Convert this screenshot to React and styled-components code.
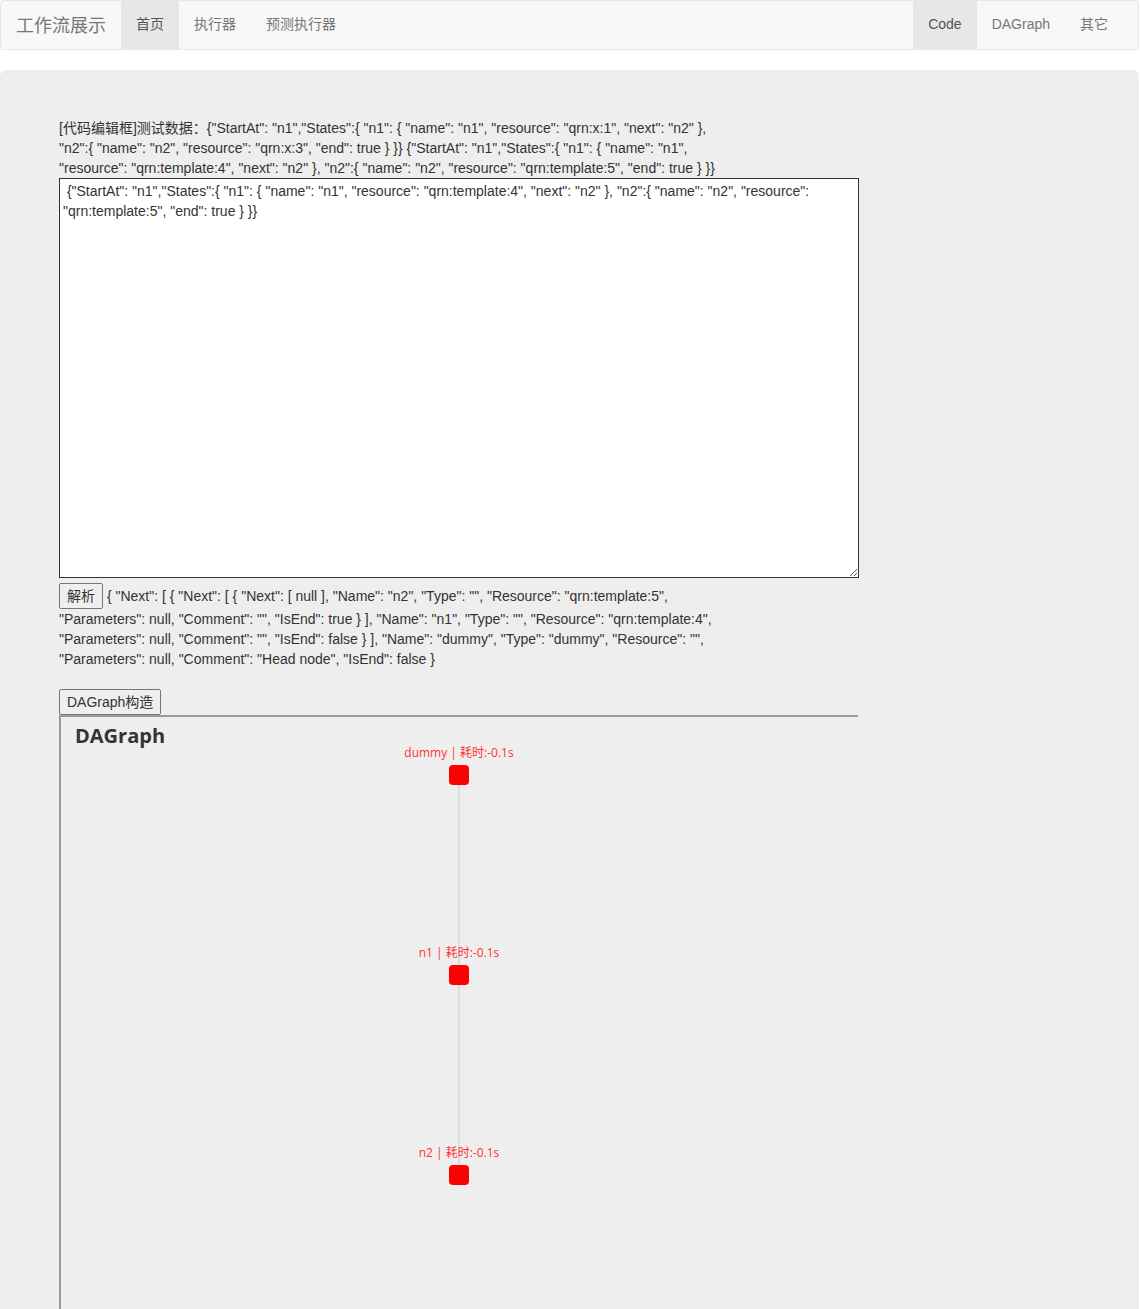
import React from 'react';
import styled, { createGlobalStyle } from 'styled-components';

const GlobalStyle = createGlobalStyle`
    html, body {
        margin: 0;
        padding: 0;
    }
    body {
        margin-right: 1px;
        font-family: "Liberation Sans", Arial, "Noto Sans CJK SC", sans-serif;
        font-size: 14px;
        line-height: 20px;
        color: #333;
        background: #fff;
    }
`;

const navLeft = [
    { label: '首页', active: true },
    { label: '执行器' },
    { label: '预测执行器' },
];

const navRight = [
    { label: 'Code', active: true },
    { label: 'DAGraph' },
    { label: '其它' },
];

const sample1 = '{"StartAt": "n1","States":{ "n1": { "name": "n1", "resource": "qrn:x:1", "next": "n2" }, "n2":{ "name": "n2", "resource": "qrn:x:3", "end": true } }}';
const sample2 = '{"StartAt": "n1","States":{ "n1": { "name": "n1", "resource": "qrn:template:4", "next": "n2" }, "n2":{ "name": "n2", "resource": "qrn:template:5", "end": true } }}';
const parsed = '{ "Next": [ { "Next": [ { "Next": [ null ], "Name": "n2", "Type": "", "Resource": "qrn:template:5", "Parameters": null, "Comment": "", "IsEnd": true } ], "Name": "n1", "Type": "", "Resource": "qrn:template:4", "Parameters": null, "Comment": "", "IsEnd": false } ], "Name": "dummy", "Type": "dummy", "Resource": "", "Parameters": null, "Comment": "Head node", "IsEnd": false }';

const nodes = [
    { name: 'dummy', y: 58 },
    { name: 'n1', y: 258 },
    { name: 'n2', y: 458 },
];

function App() {
    return (
        <>
            <GlobalStyle />
            <Navbar>
                <NavGroup>
                    <Brand>工作流展示</Brand>
                    {navLeft.map((item) => (
                        <NavItem key={item.label} $active={item.active}>{item.label}</NavItem>
                    ))}
                </NavGroup>
                <NavGroup>
                    {navRight.map((item) => (
                        <NavItem key={item.label} $active={item.active}>{item.label}</NavItem>
                    ))}
                </NavGroup>
            </Navbar>

            <Jumbotron>
                <TextBlock>[代码编辑框]测试数据：{sample1} {sample2}</TextBlock>
                <Editor spellCheck={false} defaultValue={' ' + sample2} />
                <TextBlock>
                    <Button>解析</Button> {parsed}
                </TextBlock>
                <ButtonRow>
                    <Button>DAGraph构造</Button>
                </ButtonRow>
                <GraphFrame>
                    <GraphTitle>DAGraph</GraphTitle>
                    <GraphCanvas width="796" height="700">
                        <line x1="398" y1={nodes[0].y + 10} x2="398" y2={nodes[nodes.length - 1].y - 10} stroke="#ddd" strokeWidth="2" />
                        {nodes.map((n) => (
                            <g key={n.name}>
                                <text x="398" y={n.y - 18} textAnchor="middle" fill="#f33" fontSize="12" fontFamily="'Open Sans', 'Noto Sans CJK SC', sans-serif">
                                    {n.name} | 耗时:-0.1s
                                </text>
                                <rect x="388" y={n.y - 10} width="20" height="20" rx="4" fill="#f00" />
                            </g>
                        ))}
                    </GraphCanvas>
                </GraphFrame>
            </Jumbotron>
        </>
    );
}

const Navbar = styled.nav`
    display: flex;
    justify-content: space-between;
    height: 48px;
    padding: 0 15px;
    background: #f8f8f8;
    border: 1px solid #e7e7e7;
    border-radius: 4px;
    margin-bottom: 20px;
`;

const NavGroup = styled.div`
    display: flex;
    align-items: stretch;
`;

const Brand = styled.span`
    font-family: "Noto Sans CJK SC", sans-serif;
    font-size: 18px;
    line-height: 46px;
    color: #777;
    padding-right: 15px;
`;

const NavItem = styled.span`
    padding: 0 15px 2px;
    line-height: 46px;
    font-size: 14px;
    font-family: "Liberation Sans", Arial, "Noto Sans CJK SC", sans-serif;
    color: ${(p) => (p.$active ? '#555' : '#777')};
    background: ${(p) => (p.$active ? '#e7e7e7' : 'transparent')};
`;

const Jumbotron = styled.div`
    background: #eee;
    border-radius: 6px;
    padding: 48px 60px 0 59px;
    height: 1300px;
    overflow: hidden;
`;

const TextBlock = styled.div`
    max-width: 680px;
`;

const Editor = styled.textarea`
    display: block;
    box-sizing: border-box;
    width: 800px;
    height: 400px;
    margin: 0 0 5px;
    padding: 2px 3px;
    border: 1px solid #333;
    font-family: inherit;
    font-size: 14px;
    line-height: 20px;
    color: #333;
    background: #fff;
    resize: both;
`;

const Button = styled.button`
    font-family: inherit;
    font-size: 14px;
    line-height: 20px;
    padding: 2px 7px;
    color: #333;
    background: #efefef;
    border: 1px solid #767676;
    border-radius: 2px;
`;

const ButtonRow = styled.div`
    margin-top: 20px;
    line-height: 0;
`;

const GraphFrame = styled.div`
    position: relative;
    box-sizing: border-box;
    width: 800px;
    height: 700px;
    border-style: solid;
    border-width: 2px;
    border-color: #999 #eee #eee #999;
`;

const GraphTitle = styled.h3`
    margin: 0;
    padding: 7px 14px;
    font-family: "Open Sans", sans-serif;
    font-size: 20px;
    line-height: 24px;
    font-weight: 700;
    color: #333;
`;

const GraphCanvas = styled.svg`
    position: absolute;
    left: 0;
    top: 0;
`;

export default App;
